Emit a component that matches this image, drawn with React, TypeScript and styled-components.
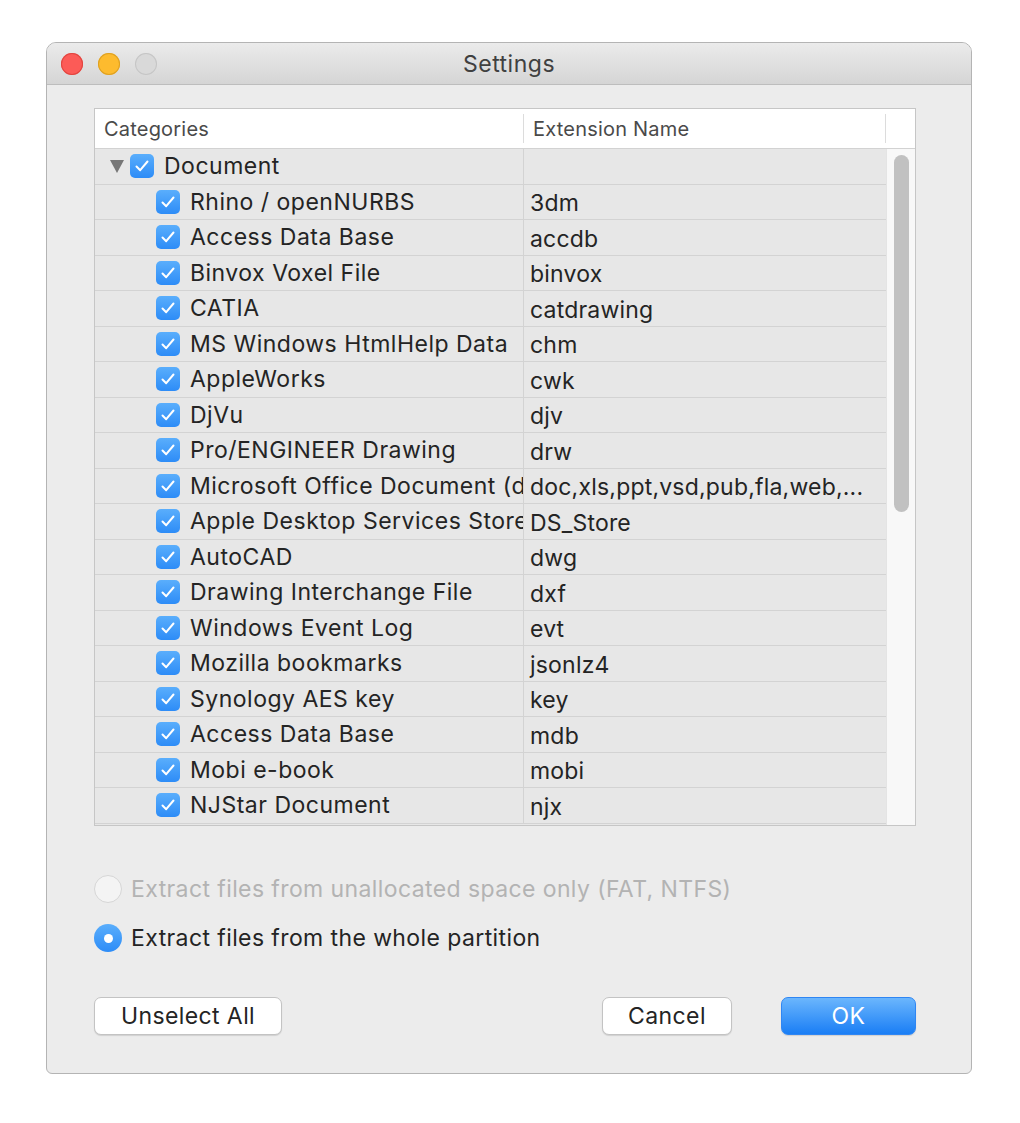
import React from "react";
import styled, { createGlobalStyle } from "styled-components";

const GlobalStyle = createGlobalStyle`
  body {
    margin: 0;
    background: #ffffff;
    font-family: Inter, "Noto Sans", "Liberation Sans", sans-serif;
    color: #222;
  }
`;

const Window = styled.div`
  margin: 42px 0 0 46px;
  width: 926px;
  height: 1032px;
  box-sizing: border-box;
  border: 1px solid #b4b4b4;
  border-radius: 10px 10px 6px 6px;
  background: #ececec;
  overflow: hidden;
  display: flex;
  flex-direction: column;
`;

const TitleBar = styled.div`
  height: 42px;
  flex: 0 0 auto;
  box-sizing: border-box;
  display: grid;
  grid-template-columns: 1fr auto 1fr;
  align-items: center;
  padding: 0 14px;
  background: linear-gradient(#ebebeb, #d5d5d5);
  border-bottom: 1px solid #bdbdbd;
`;

const Lights = styled.div`
  display: flex;
  gap: 15px;
`;

const Light = styled.span<{ $color: string; $edge: string }>`
  width: 22px;
  height: 22px;
  border-radius: 50%;
  background: ${(p) => p.$color};
  box-shadow: inset 0 0 0 1px ${(p) => p.$edge};
`;

const Title = styled.div`
  font-size: 23px;
  letter-spacing: 0.5px;
  color: #404040;
`;

const Body = styled.div`
  padding: 23px 55px 0 47px;
  display: flex;
  flex-direction: column;
`;

const Table = styled.div`
  border: 1px solid #c6c6c6;
  background: #e7e7e7;
`;

const Header = styled.div`
  display: grid;
  grid-template-columns: 429px 362px 1fr;
  height: 40px;
  background: #fff;
  border-bottom: 1px solid #d2d2d2;
  box-sizing: border-box;
`;

const HeaderCell = styled.div<{ $last?: boolean }>`
  display: flex;
  align-items: center;
  padding-left: 9px;
  font-size: 20px;
  letter-spacing: 0.2px;
  color: #4a4a4a;
  border-right: ${(p) => (p.$last ? "none" : "1px solid #dcdcdc")};
  margin: 5px 0;
`;

const TableBody = styled.div`
  display: flex;
  height: 676px;
`;

const Rows = styled.div`
  flex: 1;
  display: flex;
  flex-direction: column;
`;

const Row = styled.div`
  display: grid;
  grid-template-columns: 429px 1fr;
  height: 35.5px;
  flex: 0 0 35.5px;
  box-sizing: border-box;
  border-bottom: 1px solid #d3d3d3;
  font-size: 23px;
  letter-spacing: 0.5px;
  color: #242424;
`;

const NameCell = styled.div<{ $indent: number }>`
  display: flex;
  align-items: center;
  gap: 10px;
  padding: 0 5px 0 ${(p) => p.$indent}px;
  border-right: 1px solid #d3d3d3;
  white-space: nowrap;
  overflow: hidden;
`;

const ExtCell = styled.div`
  display: flex;
  align-items: center;
  padding: 3px 0 0 6px;
  letter-spacing: 0.2px;
  white-space: nowrap;
  overflow: hidden;
`;

const Disclosure = styled.span`
  width: 0;
  height: 0;
  border-left: 7px solid transparent;
  border-right: 7px solid transparent;
  border-top: 13px solid #777;
  margin-right: -4px;
`;

const Box = styled.span`
  width: 24px;
  height: 24px;
  flex: 0 0 24px;
  border-radius: 5px;
  background: linear-gradient(#5aaefc, #2d8cf7);
  display: flex;
  align-items: center;
  justify-content: center;
`;

const ScrollTrack = styled.div`
  width: 29px;
  background: #f8f8f8;
  border-left: 1px solid #e4e4e4;
  box-sizing: border-box;
  padding: 6px 6px 0 7px;
`;

const Thumb = styled.div`
  height: 357px;
  border-radius: 8px;
  background: #c1c1c1;
`;

const Options = styled.div`
  margin-top: 49px;
  display: flex;
  flex-direction: column;
  gap: 21px;
`;

const Option = styled.div<{ $disabled?: boolean }>`
  display: flex;
  align-items: center;
  gap: 9px;
  font-size: 23px;
  letter-spacing: 0.4px;
  color: ${(p) => (p.$disabled ? "#b3b3b3" : "#242424")};
`;

const Radio = styled.span<{ $on?: boolean }>`
  width: 28px;
  height: 28px;
  box-sizing: border-box;
  border-radius: 50%;
  display: flex;
  align-items: center;
  justify-content: center;
  background: ${(p) => (p.$on ? "linear-gradient(#5aaefc, #2d8cf7)" : "#f4f4f4")};
  border: ${(p) => (p.$on ? "none" : "1px solid #d6d6d6")};

  &::after {
    content: "";
    display: ${(p) => (p.$on ? "block" : "none")};
    width: 9px;
    height: 9px;
    border-radius: 50%;
    background: #fff;
  }
`;

const Buttons = styled.div`
  margin-top: 45px;
  display: flex;
  align-items: center;
`;

const Button = styled.button<{ $width: number; $primary?: boolean }>`
  width: ${(p) => p.$width}px;
  height: 38px;
  border-radius: 7px;
  font-family: inherit;
  font-size: 23px;
  letter-spacing: 0.4px;
  padding: 0;
  border: 1px solid ${(p) => (p.$primary ? "#2f86f3" : "#c3c3c3")};
  background: ${(p) => (p.$primary ? "linear-gradient(#6bb6fd, #1a7ef5)" : "#ffffff")};
  color: ${(p) => (p.$primary ? "#ffffff" : "#242424")};
  box-shadow: 0 1px 1px rgba(0, 0, 0, 0.12);
`;

const Spacer = styled.div`
  flex: 1;
`;

const Check = () => (
  <svg width="16" height="14" viewBox="0 0 16 14">
    <path d="M2.5 7.5 L6.2 11.2 L13.5 2.5" fill="none" stroke="#fff" strokeWidth="2" strokeLinecap="round" strokeLinejoin="round" />
  </svg>
);

const items: [string, string][] = [
  ["Rhino / openNURBS", "3dm"],
  ["Access Data Base", "accdb"],
  ["Binvox Voxel File", "binvox"],
  ["CATIA", "catdrawing"],
  ["MS Windows HtmlHelp Data", "chm"],
  ["AppleWorks", "cwk"],
  ["DjVu", "djv"],
  ["Pro/ENGINEER Drawing", "drw"],
  ["Microsoft Office Document (doc, xls)", "doc,xls,ppt,vsd,pub,fla,web,..."],
  ["Apple Desktop Services Store", "DS_Store"],
  ["AutoCAD", "dwg"],
  ["Drawing Interchange File", "dxf"],
  ["Windows Event Log", "evt"],
  ["Mozilla bookmarks", "jsonlz4"],
  ["Synology AES key", "key"],
  ["Access Data Base", "mdb"],
  ["Mobi e-book", "mobi"],
  ["NJStar Document", "njx"],
];

const App = () => {
  return (
    <>
      <GlobalStyle />
      <Window>
        <TitleBar>
          <Lights>
            <Light $color="#fc5b57" $edge="#e14640" />
            <Light $color="#fdbb2e" $edge="#dea123" />
            <Light $color="#d9d9d9" $edge="#c6c6c6" />
          </Lights>
          <Title>Settings</Title>
          <div />
        </TitleBar>
        <Body>
          <Table>
            <Header>
              <HeaderCell>Categories</HeaderCell>
              <HeaderCell>Extension Name</HeaderCell>
              <HeaderCell $last />
            </Header>
            <TableBody>
              <Rows>
                <Row>
                  <NameCell $indent={15}>
                    <Disclosure />
                    <Box>
                      <Check />
                    </Box>
                    Document
                  </NameCell>
                  <ExtCell />
                </Row>
                {items.map(([name, ext], i) => (
                  <Row key={i}>
                    <NameCell $indent={61}>
                      <Box>
                        <Check />
                      </Box>
                      {name}
                    </NameCell>
                    <ExtCell>{ext}</ExtCell>
                  </Row>
                ))}
              </Rows>
              <ScrollTrack>
                <Thumb />
              </ScrollTrack>
            </TableBody>
          </Table>
          <Options>
            <Option $disabled>
              <Radio />
              Extract files from unallocated space only (FAT, NTFS)
            </Option>
            <Option>
              <Radio $on />
              Extract files from the whole partition
            </Option>
          </Options>
          <Buttons>
            <Button $width={188}>Unselect All</Button>
            <Spacer />
            <Button $width={130}>Cancel</Button>
            <Button $width={135} $primary style={{ marginLeft: 49 }}>
              OK
            </Button>
          </Buttons>
        </Body>
      </Window>
    </>
  );
};

export default App;
